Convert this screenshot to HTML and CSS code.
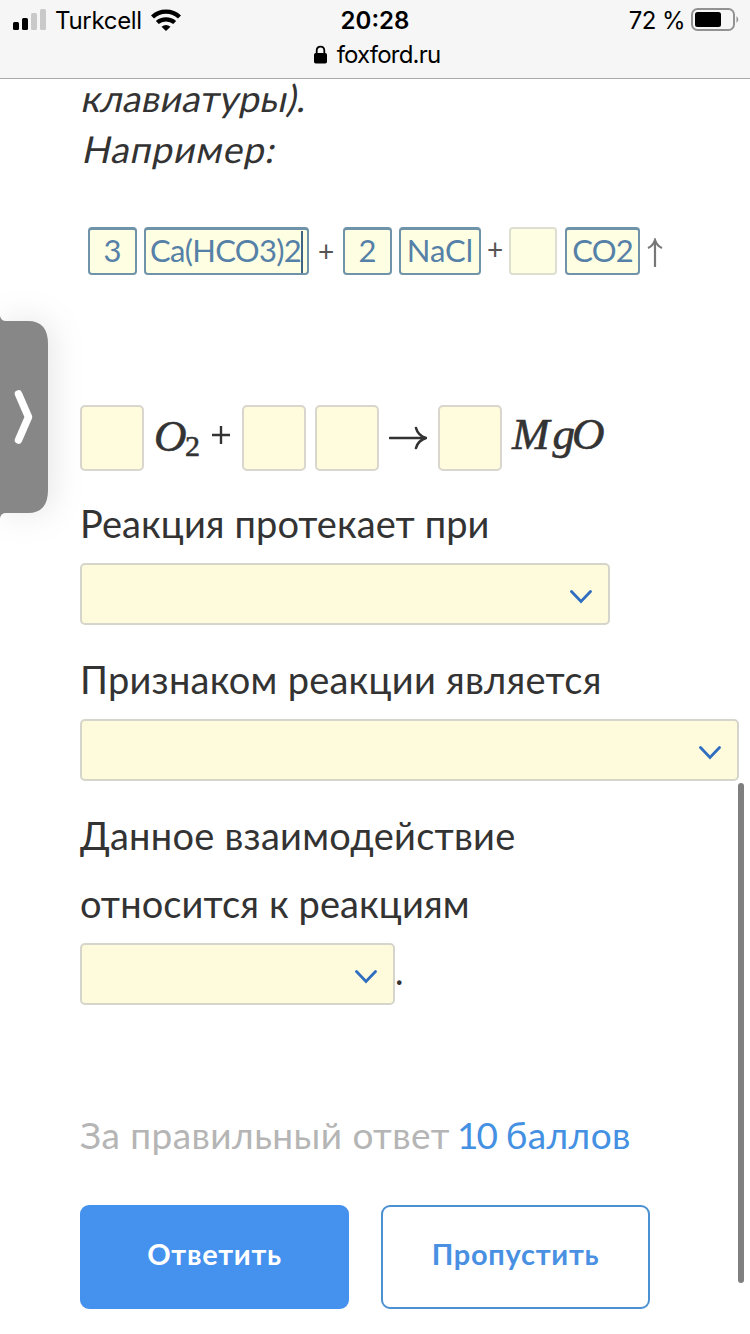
FILE: index.html
```
<!DOCTYPE html>
<html lang="ru">
<head>
    <meta charset="UTF-8">
    <meta name="viewport" content="width=device-width, initial-scale=1.0">
    <title>foxford.ru</title>
    <link rel="stylesheet" href="styles.css">
</head>
<body>
    <header class="browser-bar">
        <div class="status">
            <div class="status-left">
                <svg class="signal" width="34" height="22" viewBox="0 0 34 22">
                    <rect x="0" y="13" width="6" height="8" rx="1.5" fill="#000"/>
                    <rect x="9" y="9" width="6" height="12" rx="1.5" fill="#000"/>
                    <rect x="18" y="4" width="6" height="17" rx="1.5" fill="#c9c9c9"/>
                    <rect x="27" y="0" width="6" height="21" rx="1.5" fill="#c9c9c9"/>
                </svg>
                <span class="carrier">Turkcell</span>
                <svg class="wifi" width="30" height="22" viewBox="0 0 30 22">
                    <path d="M1.5 8C9 .8 21 .8 28.5 8" fill="none" stroke="#000" stroke-width="4.4"/>
                    <path d="M6.3 13.5C11 9.2 19 9.2 23.7 13.5" fill="none" stroke="#000" stroke-width="4.2"/>
                    <path d="M15 22L10.5 17.8Q15 14.2 19.5 17.8Z" fill="#000"/>
                </svg>
            </div>
            <div class="time">20:28</div>
            <div class="status-right">
                <span class="percent">72 %</span>
                <svg class="battery" width="48" height="24" viewBox="0 0 48 24">
                    <rect x="1" y="1" width="42" height="21" rx="5.5" fill="none" stroke="#929292" stroke-width="2"/>
                    <rect x="4" y="4" width="26" height="15" rx="2.5" fill="#000"/>
                    <path d="M45.5 8Q49 11.5 45.5 15Z" fill="#929292"/>
                </svg>
            </div>
        </div>
        <div class="address">
            <svg class="lock" width="13" height="19" viewBox="0 0 13 19">
                <path d="M2.7 9V5.5C2.7 .2 10.3 .2 10.3 5.5V9" fill="none" stroke="#000" stroke-width="1.8"/>
                <rect x="0" y="8" width="13" height="10.5" rx="1.8" fill="#000"/>
            </svg>
            <span class="host">foxford.ru</span>
        </div>
    </header>

    <main class="task">
        <div class="hint">
            <div class="hint-a">клавиатуры).</div>
            <div class="hint-b">Например:</div>
        </div>

        <div class="sample">
            <span class="chip chip-num">3</span>
            <span class="chip chip-ca">Ca(HCO3)2<i class="caret"></i></span>
            <span class="plus plus-a">+</span>
            <span class="chip chip-num">2</span>
            <span class="chip chip-na">NaCl</span>
            <span class="plus plus-b">+</span>
            <span class="chip chip-empty"></span>
            <span class="chip chip-co">CO2</span>
            <svg class="gas" width="18" height="30" viewBox="0 0 18 30">
                <path d="M9 29V2M2 10Q7 8 9 2Q11 8 16 10" fill="none" stroke="#777" stroke-width="2.2"/>
            </svg>
        </div>

        <div class="equation">
            <span class="box"></span>
            <span class="math oxygen">O<sub>2</sub></span>
            <svg class="sign" width="20" height="20" viewBox="0 0 20 20">
                <path d="M10 1V19M1 10H19" stroke="#333" stroke-width="2.4"/>
            </svg>
            <span class="box box-b"></span>
            <span class="box box-c"></span>
            <svg class="arrow" width="38" height="24" viewBox="0 0 38 24">
                <path d="M1 12H36M27 2Q29 9.5 37 12Q29 14.5 27 22" fill="none" stroke="#333" stroke-width="2.6" stroke-linecap="round"/>
            </svg>
            <span class="box box-d"></span>
            <span class="math oxide"><span class="m">M</span><span class="g">g</span>O</span>
        </div>

        <div class="label label-1">Реакция протекает при</div>
        <div class="select select-1">
            <svg class="chevron" width="22" height="14" viewBox="0 0 22 14"><path d="M1.5 1.5L11 11.5L20.5 1.5"/></svg>
        </div>

        <div class="label label-2">Признаком реакции является</div>
        <div class="select select-2">
            <svg class="chevron" width="22" height="14" viewBox="0 0 22 14"><path d="M1.5 1.5L11 11.5L20.5 1.5"/></svg>
        </div>

        <div class="label label-3">Данное взаимодействие</div>
        <div class="label label-4">относится к реакциям</div>
        <div class="last-row">
            <div class="select select-3">
                <svg class="chevron" width="22" height="14" viewBox="0 0 22 14"><path d="M1.5 1.5L11 11.5L20.5 1.5"/></svg>
            </div>
            <span class="dot">.</span>
        </div>

        <div class="score"><span class="score-text">За правильный ответ</span><span class="points"><span class="amount">10</span> баллов</span></div>

        <div class="buttons">
            <button class="btn btn-primary">Ответить</button>
            <button class="btn btn-outline">Пропустить</button>
        </div>
    </main>

    <div class="drawer">
        <svg width="48" height="204" viewBox="0 0 48 204">
            <path d="M0 0Q1 5 6 5H28Q48 5 48 28V174Q48 197 28 197H6Q1 197 0 202Z" fill="#878787"/>
            <path d="M18.5 78L28.5 101L18.5 124" fill="none" stroke="#fff" stroke-width="7.5" stroke-linecap="round" stroke-linejoin="round"/>
        </svg>
    </div>
    <div class="scrollbar"></div>
</body>
</html>
```
FILE: styles.css
```
* {
    box-sizing: border-box;
}

body {
    margin: 0;
    width: 750px;
    height: 1334px;
    overflow: hidden;
    position: relative;
    background: #fff;
    color: #333;
    font-family: Lato, "Open Sans", sans-serif;
}

/* browser bar */
.browser-bar {
    height: 79px;
    background: #f6f6f6;
    border-bottom: 1px solid #a9a9a9;
    color: #000;
    font-family: Inter, sans-serif;
    position: relative;
    z-index: 1;
}

.status {
    display: grid;
    grid-template-columns: 1fr auto 1fr;
    align-items: center;
    height: 40px;
    padding: 0 11px 0 13px;
}

.status-left,
.status-right {
    display: flex;
    align-items: center;
}

.status-right {
    justify-content: flex-end;
}

.carrier {
    margin-left: 8px;
    font-size: 24px;
    letter-spacing: -0.3px;
}

.wifi {
    margin-left: 9px;
}

.time {
    margin-right: 2px;
    font-size: 24px;
    font-weight: 600;
}

.percent {
    margin-right: 6px;
    font-size: 24px;
    letter-spacing: -0.6px;
}

.address {
    display: flex;
    justify-content: center;
    align-items: center;
    height: 28px;
    padding-left: 4px;
    gap: 10px;
    font-size: 24px;
}

.host {
    letter-spacing: -0.8px;
}

/* task text */
.task {
    padding-left: 80px;
}

.hint {
    height: 104px;
    margin-top: -7px;
    font-size: 37px;
    line-height: 51px;
    white-space: nowrap;
}

/* slanted upright letterforms instead of the true italic */
.hint-a,
.hint-b {
    width: max-content;
    transform: skewX(-12deg);
}

.hint-a {
    margin-left: 3px;
    letter-spacing: 0.4px;
}

.hint-b {
    margin-left: 4px;
    letter-spacing: 1px;
}

/* example row */
.sample {
    display: flex;
    align-items: center;
    height: 48px;
    margin: 51px 0 0 8px;
}

.chip {
    display: flex;
    flex: none;
    align-items: center;
    justify-content: center;
    height: 48px;
    padding-bottom: 3px;
    border: 2px solid #6f93a8;
    border-top-width: 3px;
    border-radius: 4px;
    background: #fefee2;
    color: #5580a8;
    font-size: 31px;
    line-height: 40px;
}

.chip-num {
    width: 49px;
}

.chip-ca {
    width: 165px;
    margin-left: 7px;
    letter-spacing: -0.7px;
}

.caret {
    width: 2px;
    height: 42px;
    margin-bottom: -3px;
    background: #3f6486;
}

.chip-na {
    width: 82px;
    margin-left: 7px;
}

.chip-empty {
    width: 48px;
    border: 2px solid #dedfd0;
}

.chip-co {
    width: 75px;
    margin-left: 8px;
    letter-spacing: -0.8px;
}

.plus {
    flex: none;
    color: #555;
    font-size: 28px;
    text-align: center;
}

.plus-a {
    width: 34px;
}

.plus-b {
    width: 28px;
    padding-bottom: 4px;
}

.gas {
    margin: 3px 0 0 6px;
}

/* equation */
.equation {
    display: flex;
    align-items: center;
    height: 66px;
    margin-top: 130px;
}

.box {
    flex: none;
    width: 64px;
    height: 66px;
    border: 2px solid #d8d6cd;
    border-radius: 5px;
    background: #fffbdd;
}

.math {
    flex: none;
    padding-bottom: 8px;
    font-family: "Liberation Serif", serif;
    font-size: 45px;
    font-style: italic;
    line-height: 60px;
    -webkit-text-stroke: 0.6px #333;
}

.oxygen {
    width: 57px;
    padding: 0 0 4px 10px;
    letter-spacing: -1.5px;
    white-space: nowrap;
}

.oxygen sub {
    font-size: 30px;
    font-style: normal;
    line-height: 0;
    vertical-align: -5px;
}

.sign {
    margin: 0 0 6px 10px;
}

.box-b {
    margin-left: 11px;
}

.box-c {
    margin-left: 9px;
}

.arrow {
    margin-left: 10px;
}

.box-d {
    margin-left: 11px;
}

.oxide {
    margin-left: 10px;
}

.m {
    letter-spacing: 3px;
}

.g {
    letter-spacing: -3px;
}

/* questions */
.label {
    height: 68px;
    font-size: 38px;
    line-height: 64px;
    white-space: nowrap;
}

.label-1 {
    margin-top: 20px;
    letter-spacing: 0.1px;
}

.label-2,
.label-3 {
    margin-top: 22px;
    letter-spacing: 0.25px;
}

.label-4 {
    letter-spacing: 0.1px;
}

.select {
    display: flex;
    flex: none;
    align-items: center;
    justify-content: flex-end;
    height: 62px;
    margin-top: 4px;
    padding: 6px 16px 0 0;
    border: 2px solid #d6d5cc;
    border-radius: 5px;
    background: #fefbdc;
}

.select-1 {
    width: 530px;
}

.select-2 {
    width: 659px;
}

.select-3 {
    width: 315px;
}

.chevron path {
    fill: none;
    stroke: #2f6dc0;
    stroke-width: 2.8;
    stroke-linecap: round;
}

.last-row {
    display: flex;
    align-items: center;
}

.dot {
    padding-bottom: 2px;
    font-size: 36px;
}

.score {
    display: flex;
    height: 60px;
    margin-top: 102px;
    color: #b5b5b5;
    font-size: 37px;
    line-height: 56px;
    white-space: nowrap;
}

.score-text {
    letter-spacing: 0.45px;
}

.points {
    margin-left: 7px;
    color: #4490e2;
    letter-spacing: 0.4px;
}

.amount {
    letter-spacing: -2px;
}

.buttons {
    display: flex;
    gap: 32px;
    margin-top: 38px;
}

.btn {
    width: 269px;
    height: 104px;
    padding: 0 0 8px;
    border: 2px solid #4591ee;
    border-radius: 9px;
    font-family: inherit;
    font-size: 29px;
    font-weight: 700;
    letter-spacing: 0.7px;
}

.btn-primary {
    background: #4591ee;
    color: #fff;
}

.btn-outline {
    border-color: #4b91d2;
    background: #fff;
    color: #4a90e2;
}

/* overlays */
.drawer {
    position: absolute;
    top: 316px;
    left: 0;
    height: 204px;
    filter: drop-shadow(4px 0 16px rgba(0, 0, 0, 0.1));
}

.scrollbar {
    position: absolute;
    top: 783px;
    right: 6px;
    width: 6px;
    height: 500px;
    border-radius: 3px;
    background: #7f7f7f;
}
```
